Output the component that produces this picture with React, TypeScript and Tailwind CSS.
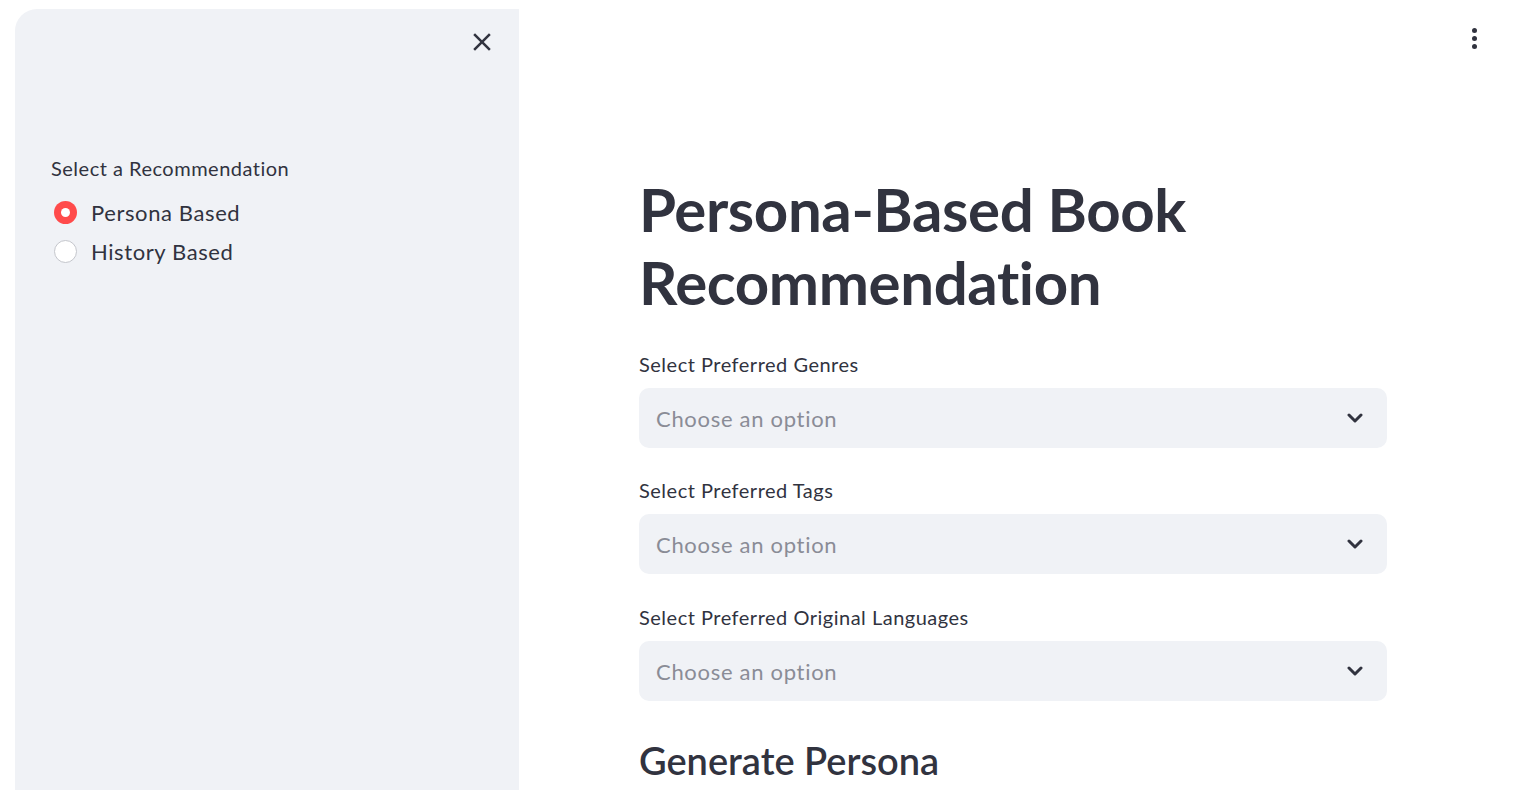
import React from "react";

const font = { fontFamily: "Lato, 'Noto Sans', sans-serif" };

function Chevron() {
  return (
    <svg width="16" height="10" viewBox="0 0 16 10" className="text-[#31333f]">
      <path d="M2 2 L8 8 L14 2" fill="none" stroke="currentColor" strokeWidth="3" strokeLinecap="round" strokeLinejoin="round" />
    </svg>
  );
}

function SelectField({ label }: { label: string }) {
  return (
    <div className="flex flex-col">
      <div className="text-[20px] leading-[28px] tracking-[0.5px] text-[#31333f] mb-[10px]">{label}</div>
      <div className="h-[60px] w-full rounded-[10px] bg-[#f0f2f6] flex items-center justify-between pl-[17px] pr-[24px]">
        <span className="text-[22px] tracking-[0.7px] text-[#8a8c96]">Choose an option</span>
        <Chevron />
      </div>
    </div>
  );
}

export default function App() {
  return (
    <div className="w-[1516px] h-[790px] overflow-hidden bg-white flex" style={font}>
      <div className="w-[519px] pl-[15px] pt-[9px] flex shrink-0">
        <div className="flex-1 bg-[#f0f2f6] rounded-tl-[22px] flex flex-col pl-[36px] pr-[21px] pt-[17px]">
          <div className="flex justify-end">
            <button className="w-[32px] h-[32px] flex items-center justify-center text-[#31333f]">
              <svg width="30" height="30" viewBox="0 0 24 24">
                <path fill="currentColor" d="M19 6.41L17.59 5 12 10.59 6.41 5 5 6.41 10.59 12 5 17.59 6.41 19 12 13.41 17.59 19 19 17.59 13.41 12z" />
              </svg>
            </button>
          </div>
          <div className="mt-[96px] text-[20px] leading-[28px] tracking-[0.5px] text-[#31333f]">Select a Recommendation</div>
          <div className="mt-[16px] flex flex-col gap-[11px]">
            <div className="flex items-center h-[28px]">
              <div className="ml-[3px] w-[23px] h-[23px] rounded-full bg-[#ff4b4b] flex items-center justify-center">
                <div className="w-[9px] h-[9px] rounded-full bg-white" />
              </div>
              <span className="ml-[14px] text-[22px] tracking-[0.6px] text-[#31333f]">Persona Based</span>
            </div>
            <div className="flex items-center h-[28px]">
              <div className="ml-[3px] w-[23px] h-[23px] rounded-full bg-white border border-[#c4c6cc]" />
              <span className="ml-[14px] text-[22px] tracking-[0.6px] text-[#31333f]">History Based</span>
            </div>
          </div>
        </div>
      </div>
      <div className="flex-1 flex flex-col">
        <div className="flex justify-end pr-[39px] pt-[28px] h-[173px]">
          <div className="flex flex-col gap-[3px] items-center">
            <div className="w-[5px] h-[5px] rounded-full bg-[#31333f]" />
            <div className="w-[5px] h-[5px] rounded-full bg-[#31333f]" />
            <div className="w-[5px] h-[5px] rounded-full bg-[#31333f]" />
          </div>
        </div>
        <div className="pl-[120px] w-[868px] flex flex-col">
          <h1 className="text-[60px] leading-[73px] font-bold text-[#31333f] tracking-[-0.4px]">
            Persona-Based Book Recommendation
          </h1>
          <div className="mt-[31px] flex flex-col">
            <SelectField label="Select Preferred Genres" />
            <div className="mt-[28px]">
              <SelectField label="Select Preferred Tags" />
            </div>
            <div className="mt-[29px]">
              <SelectField label="Select Preferred Original Languages" />
            </div>
          </div>
          <h2 className="mt-[35px] text-[38px] leading-[48px] font-semibold text-[#31333f]">Generate Persona</h2>
        </div>
      </div>
    </div>
  );
}
